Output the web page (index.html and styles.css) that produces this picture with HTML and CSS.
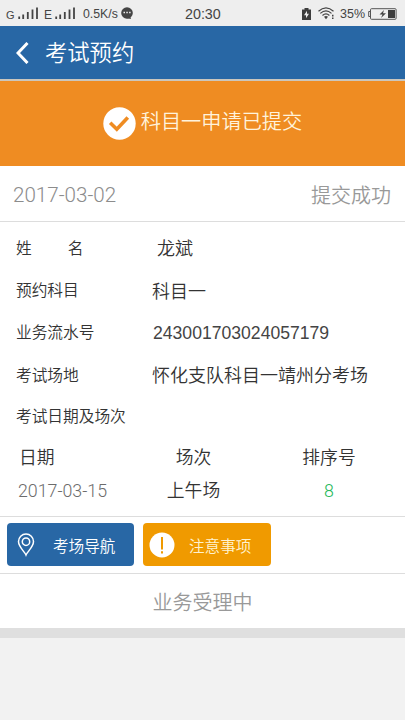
FILE: index.html
```html
<!DOCTYPE html>
<html lang="zh-CN">
<head>
<meta charset="utf-8">
<title>考试预约</title>
<link rel="stylesheet" href="styles.css">
</head>
<body>
<header class="status">
  <div class="status-left">
    <span class="carrier">G</span>
    <svg class="signal" width="21" height="12" viewBox="0 0 21 12"><path d="M1.2 12V9.5M5.2 12V7.5M9.8 12V5M14.5 12V2.5M19 12V0.500"/></svg>
    <span class="carrier second">E</span>
    <svg class="signal" width="21" height="12" viewBox="0 0 21 12"><path d="M1.2 12V9.5M5.2 12V7.5M9.8 12V5M14.5 12V2.5M19 12V0.500"/></svg>
    <span class="speed">0.5K/s</span>
    <svg class="chat" width="12" height="13" viewBox="0 0 12 13"><circle cx="6" cy="6" r="5.8" fill="#444"/><path d="M5 11l5 1-1-3z" fill="#444"/><path d="M2.500 5.500h1.500M5.300 5.500h1.500M8.100 5.500h1.500" stroke="#eee" stroke-width="1.300"/></svg>
  </div>
  <time class="clock">20:30</time>
  <div class="status-right">
    <svg width="9" height="12" viewBox="0 0 9 12"><path d="M0 1.500h2.500V0h4v1.500H9V12H0z" fill="#3d3d3d"/><path d="M5 2.800L2 7.300h2v2.900l3-4.500H5z" fill="#eee"/></svg>
    <svg class="wifi" width="17" height="13" viewBox="0 0 17 13"><path d="M.5 4.300Q8 -2.500 15.500 4.300M2.300 6.400Q8 1.300 13.500 6.400M4.500 8.500Q8 5.300 11.400 8.500" fill="none" stroke="#444" stroke-width="1.200"/><path d="M6 9.700Q8 8.500 10 9.700L8 12.300zM14 7.700h1.500v1.800H14zM14 10.500h1.500v1.500H14z" fill="#444"/></svg>
    <span class="percent">35%</span>
    <svg class="battery" width="29" height="12" viewBox="0 0 29 12"><rect x="2.500" y=".7" width="25.600" height="10.600" rx="1" fill="none" stroke="#555"/><path d="M2.500 3.500H.7v5h1.800" fill="none" stroke="#555"/><path d="M20 2h7v8h-7z" fill="#3d3d3d"/><path d="M16 2l-4.500 4.500h3L13 10l5-4.700h-3z" fill="#444"/></svg>
  </div>
</header>
<nav class="nav">
  <svg width="13" height="22" viewBox="0 0 13 22"><path d="M11.500 1L2 11l9.500 10" fill="none" stroke="#fff" stroke-width="3"/></svg>
  <h1>考试预约</h1>
</nav>
<main>
  <section class="banner">
    <svg width="33" height="33" viewBox="0 0 33 33"><circle cx="16.500" cy="16.500" r="16.200" fill="#fff"/><path d="M7.200 15.700l6.600 6.500L24.800 10.500" fill="none" stroke="#ef8c22" stroke-width="3.600"/></svg>
    <span>科目一申请已提交</span>
  </section>
  <section class="submitted"><time>2017-03-02</time><span>提交成功</span></section>
  <section class="details">
    <dl>
      <dt class="name"><span>姓</span><span>名</span></dt><dd class="person">龙斌</dd>
      <dt>预约科目</dt><dd>科目一</dd>
      <dt>业务流水号</dt><dd class="serial">243001703024057179</dd>
      <dt>考试场地</dt><dd>怀化支队科目一靖州分考场</dd>
      <dt class="last">考试日期及场次</dt><dd></dd>
    </dl>
    <div class="schedule">
      <span class="day">日期</span><span>场次</span><span>排序号</span>
      <time>2017-03-15</time><span>上午场</span><span class="order">8</span>
    </div>
  </section>
  <section class="actions">
    <button class="navigate"><svg width="18" height="24" viewBox="0 0 18 24"><path d="M9 22C7.500 18.500 1.500 14 1.500 8.600a7.500 7.500 0 0 1 15 0C16.500 14 10.500 18.500 9 22z" fill="none" stroke="#fff" stroke-width="1.500"/><circle cx="9" cy="8.700" r="3.700" fill="none" stroke="#fff" stroke-width="1.500"/></svg><span>考场导航</span></button>
    <button class="notice"><svg width="26" height="26" viewBox="0 0 26 26"><circle cx="13" cy="13" r="12.500" fill="#fff"/><path d="M13 5v12.500M13 19.200v2.300" stroke="#f09a00" stroke-width="2"/></svg><span>注意事项</span></button>
  </section>
  <section class="progress">业务受理中</section>
</main>
</body>
</html>
```
FILE: styles.css
```css
* { box-sizing: border-box; }
body {
  margin: 0;
  width: 405px;
  height: 720px;
  overflow: hidden;
  background: #f2f2f2;
  color: #333;
  font-family: "Liberation Sans", "Noto Sans CJK SC", sans-serif;
  font-weight: 350;
}
svg { display: block; flex: none; }
.status {
  height: 26px;
  display: grid;
  grid-template-columns: 185px 1fr auto;
  align-items: center;
  padding: 1px 8px 0 6px;
  background: #eee;
  color: #444;
  font-size: 12.5px;
}
.status-left, .status-right { display: flex; align-items: center; }
.carrier { width: 12px; font-size: 11px; padding-top: 2px; }
.carrier.second { margin-left: 5px; width: 11px; font-size: 12px; }
.signal { fill: none; stroke: #444; stroke-width: 1.8; margin-top: -1px; }
.speed { margin-left: 7px; width: 38px; font-size: 12.3px; }
.chat { margin-top: -1px; }
.clock { font-size: 14.3px; margin-left: -6px; }
.wifi { margin-left: 7px; }
.percent { margin-left: 5px; width: 26px; }
.battery { margin-left: 2px; }
.nav {
  height: 55px;
  display: flex;
  align-items: center;
  gap: 16px;
  padding-left: 16px;
  background: #2867a5;
  border-bottom: 2px solid #cbc6bd;
  color: #fff;
}
h1 { margin: 2px 0 0; font-size: 22.3px; line-height: 32px; font-weight: 350; }
.banner {
  height: 85px;
  display: flex;
  align-items: center;
  justify-content: center;
  gap: 5px;
  background: #ef8c22;
  color: #fff3dc;
  font-size: 20.2px;
}
.banner span { padding-bottom: 6px; }
.submitted {
  height: 56px;
  display: flex;
  align-items: center;
  justify-content: space-between;
  padding: 1px 14px 0 13px;
  background: #fff;
  border-bottom: 1px solid #ddd;
  color: #999;
  font-size: 20px;
}
.submitted time, .schedule time, .order { font-family: Roboto, "Liberation Sans", sans-serif; font-weight: 300; }
.submitted time { font-size: 20.6px; color: #8c8c8c; padding-top: 1px; }
.details { height: 295px; padding-top: 4px; background: #fff; border-bottom: 1px solid #ddd; }
dl {
  margin: 0;
  padding-left: 16px;
  display: grid;
  grid-template-columns: 136px 1fr;
  grid-auto-rows: 42.4px;
  align-items: center;
}
dt { font-size: 15.7px; }
dt.last { padding-bottom: 2px; }
dd { margin: 0; font-size: 18px; white-space: nowrap; }
.name { display: flex; gap: 36px; }
.person { padding-left: 5px; }
.serial { font-size: 17.6px; color: #444; padding: 3px 0 0 1px; }
.schedule {
  margin-top: 1px;
  display: grid;
  grid-template-columns: 125px 137px 134px;
  grid-auto-rows: 33.5px;
  align-items: center;
  justify-items: center;
  font-size: 17.8px;
}
.day { justify-self: start; padding-left: 19px; }
.schedule time { color: #6c6c6c; font-size: 17.8px; padding-top: 2px; }
.order { color: #25b85a; padding-top: 2px; }
.actions {
  height: 57px;
  display: flex;
  align-items: center;
  gap: 9px;
  padding: 0 0 1px 7px;
  background: #fff;
  border-bottom: 1px solid #ddd;
}
button {
  height: 43px;
  display: flex;
  align-items: center;
  border: 0;
  border-radius: 4px;
  font: 350 15.6px "Liberation Sans", "Noto Sans CJK SC", sans-serif;
}
.navigate { width: 127px; padding: 0 0 0 10px; gap: 18px; background: #2867a5; color: #fff; }
.notice { width: 128px; padding: 0 0 0 6px; gap: 14px; background: #f09a00; color: #fff3d0; }
.progress {
  height: 64px;
  display: flex;
  align-items: center;
  justify-content: center;
  background: #fff;
  border-bottom: 10px solid #dfdfdf;
  color: #999;
  font-size: 20px;
}
```
